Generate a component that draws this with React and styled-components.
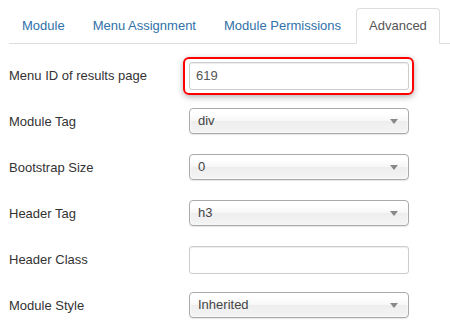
import React from "react";
import styled, { createGlobalStyle } from "styled-components";

const Global = createGlobalStyle`
  html, body { margin: 0; padding: 0; background: #fff; }
  body { font-family: "Liberation Sans", Arial, sans-serif; font-size: 13px; color: #333; }
`;

const Page = styled.div`
  padding: 8px 0 0 9px;
`;

const Tabs = styled.ul`
  list-style: none;
  margin: 0;
  padding: 0;
  display: flex;
  border-bottom: 1px solid #ddd;
`;

const Tab = styled.li`
  margin: 0 2px -1px 0;
  padding: 8px 12px;
  line-height: 18px;
  border: 1px solid ${(p) => (p.$active ? "#ddd" : "transparent")};
  border-bottom-color: ${(p) => (p.$active ? "#fff" : "transparent")};
  border-radius: 4px 4px 0 0;
  background: ${(p) => (p.$active ? "#fff" : "transparent")};
  color: ${(p) => (p.$active ? "#555" : "#3071a9")};
  white-space: nowrap;
`;

const Form = styled.div`
  padding-top: 18px;
`;

const Row = styled.div`
  display: grid;
  grid-template-columns: 180px 220px;
  height: 28px;
  margin-bottom: 18px;
`;

const Label = styled.div`
  line-height: 28px;
  color: #333;
  white-space: nowrap;
`;

const Control = styled.div`
  position: relative;
`;

const Input = styled.div`
  box-sizing: border-box;
  height: 28px;
  border: 1px solid #ccc;
  border-radius: 3px;
  box-shadow: inset 0 1px 1px rgba(0, 0, 0, 0.075);
  padding: 0 6px;
  line-height: 26px;
  color: #555;
  background: #fff;
`;

const Highlight = styled.div`
  position: absolute;
  left: -6px;
  right: -5px;
  top: -5px;
  bottom: -5px;
  border: 2px solid #f00;
  border-radius: 6px;
  box-shadow: 0 2px 6px rgba(0, 0, 0, 0.3);
  pointer-events: none;
`;

const Select = styled.div`
  box-sizing: border-box;
  height: 26px;
  border: 1px solid #aaa;
  border-radius: 4px;
  background: linear-gradient(#fff 20%, #f6f6f6 50%, #eee 52%, #f4f4f4 100%);
  box-shadow: 0 0 3px #fff inset, 0 1px 1px rgba(0, 0, 0, 0.1);
  padding: 0 8px;
  line-height: 24px;
  color: #444;
  display: flex;
  align-items: center;
  justify-content: space-between;
`;

const Arrow = styled.span`
  width: 0;
  height: 0;
  border-left: 4px solid transparent;
  border-right: 4px solid transparent;
  border-top: 5px solid #888;
  margin-right: 2px;
`;

const rows = [
  { label: "Menu ID of results page", type: "input", value: "619", highlight: true },
  { label: "Module Tag", type: "select", value: "div" },
  { label: "Bootstrap Size", type: "select", value: "0" },
  { label: "Header Tag", type: "select", value: "h3" },
  { label: "Header Class", type: "input", value: "" },
  { label: "Module Style", type: "select", value: "Inherited" },
];

export default function App() {
  return (
    <Page>
      <Global />
      <Tabs>
        <Tab>Module</Tab>
        <Tab>Menu Assignment</Tab>
        <Tab>Module Permissions</Tab>
        <Tab $active>Advanced</Tab>
      </Tabs>
      <Form>
        {rows.map((r) => (
          <Row key={r.label}>
            <Label>{r.label}</Label>
            <Control>
              {r.type === "input" ? (
                <Input>{r.value}</Input>
              ) : (
                <Select>
                  <span>{r.value}</span>
                  <Arrow />
                </Select>
              )}
              {r.highlight && <Highlight />}
            </Control>
          </Row>
        ))}
      </Form>
    </Page>
  );
}
